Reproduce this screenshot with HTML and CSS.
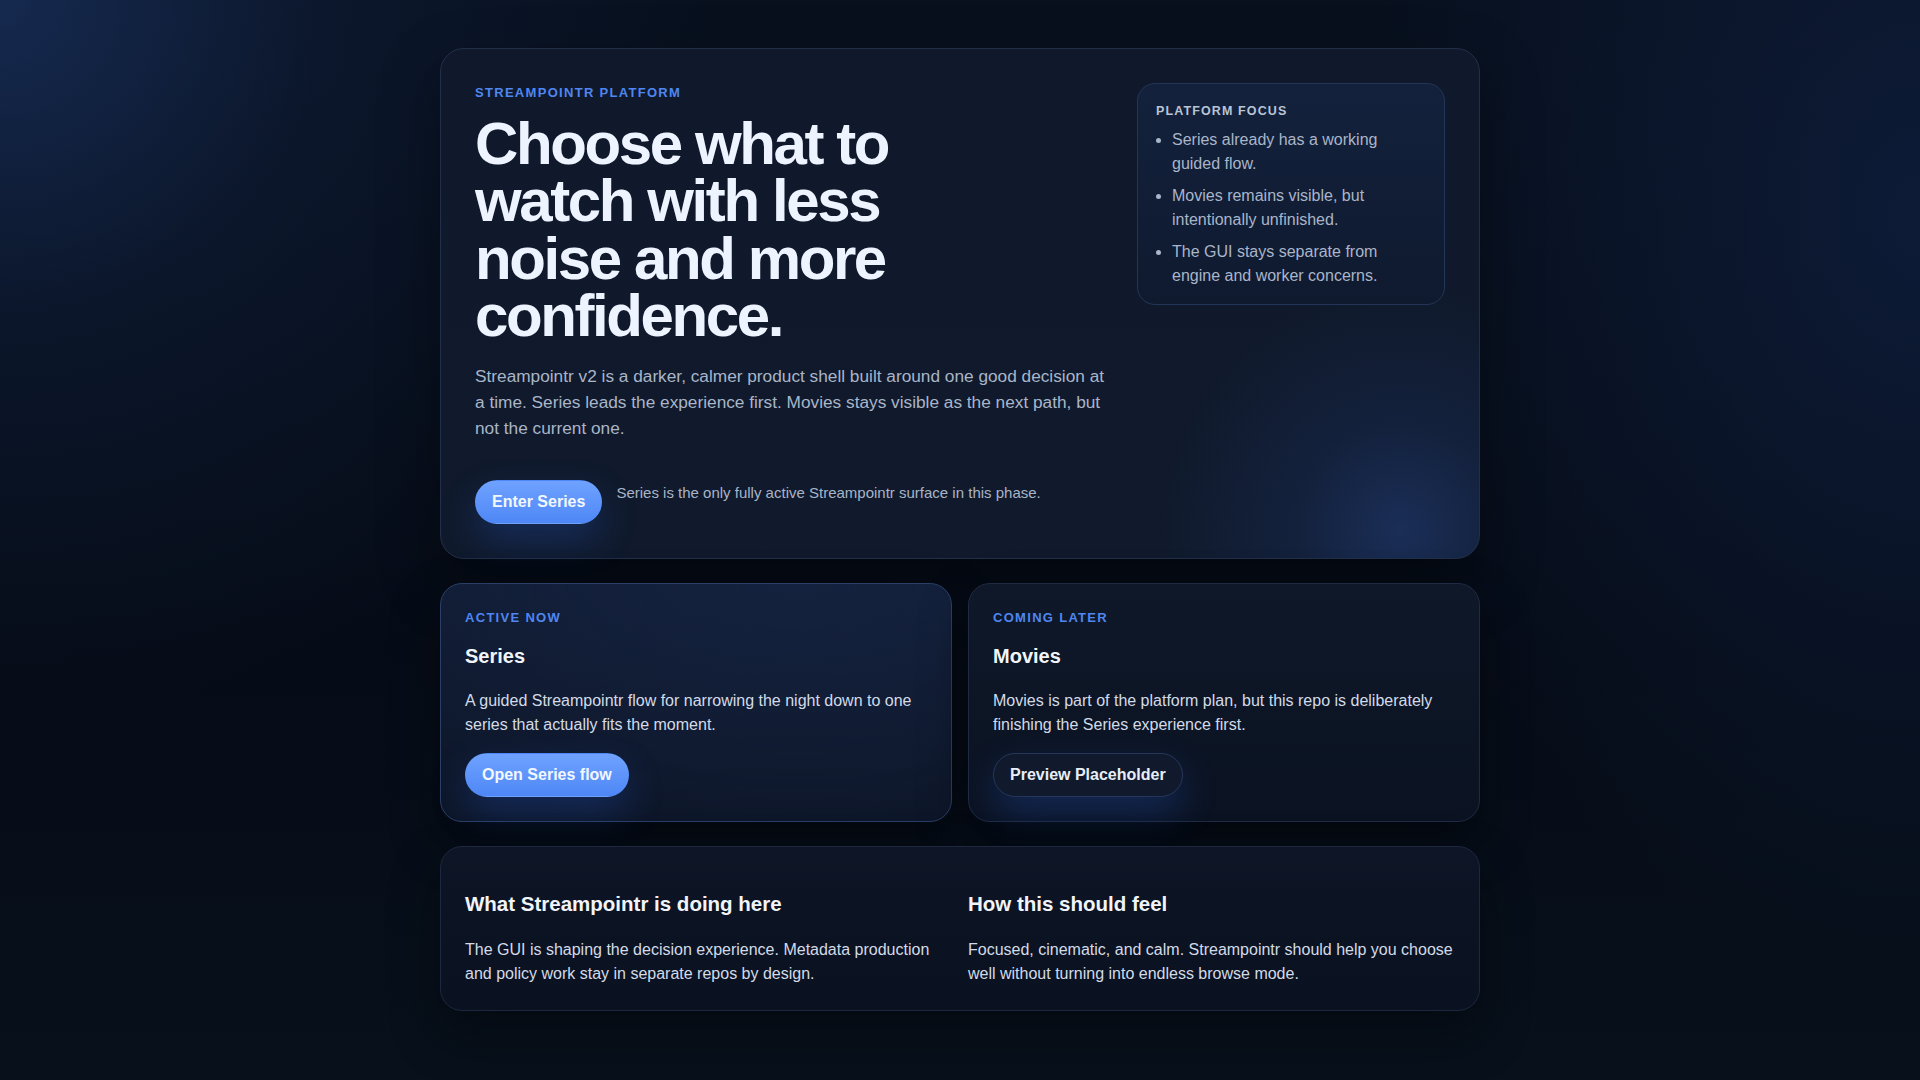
FILE: index.html
```html
<!DOCTYPE html>
<html lang="en">
<head>
<meta charset="utf-8">
<title>Streampointr</title>
<link rel="stylesheet" href="styles.css">
</head>
<body>
<main class="shell">
  <section class="hero">
    <div class="hero-main">
      <p class="eyebrow">Streampointr platform</p>
      <h1 class="hero-title">Choose what to watch with less noise and more confidence.</h1>
      <p class="lede">Streampointr v2 is a darker, calmer product shell built around one good decision at a time. Series leads the experience first. Movies stays visible as the next path, but not the current one.</p>
      <div class="actions">
        <a class="btn btn-primary" href="#">Enter Series</a>
        <p class="note">Series is the only fully active Streampointr surface in this phase.</p>
      </div>
    </div>
    <aside class="focus">
      <p class="focus-title">Platform focus</p>
      <ul class="focus-list">
        <li>Series already has a working guided flow.</li>
        <li>Movies remains visible, but intentionally unfinished.</li>
        <li>The GUI stays separate from engine and worker concerns.</li>
      </ul>
    </aside>
  </section>

  <section class="paths">
    <article class="card card-active">
      <p class="eyebrow">Active now</p>
      <h3 class="card-title">Series</h3>
      <p class="card-text">A guided Streampointr flow for narrowing the night down to one series that actually fits the moment.</p>
      <a class="btn btn-primary" href="#">Open Series flow</a>
    </article>
    <article class="card card-later">
      <p class="eyebrow">Coming later</p>
      <h3 class="card-title">Movies</h3>
      <p class="card-text">Movies is part of the platform plan, but this repo is deliberately finishing the Series experience first.</p>
      <a class="btn btn-ghost" href="#">Preview Placeholder</a>
    </article>
  </section>

  <section class="about">
    <div class="about-col">
      <h3 class="about-title">What Streampointr is doing here</h3>
      <p class="about-text">The GUI is shaping the decision experience. Metadata production and policy work stay in separate repos by design.</p>
    </div>
    <div class="about-col">
      <h3 class="about-title">How this should feel</h3>
      <p class="about-text">Focused, cinematic, and calm. Streampointr should help you choose well without turning into endless browse mode.</p>
    </div>
  </section>
</main>
</body>
</html>
```

FILE: styles.css
```css
* {
  box-sizing: border-box;
}

html, body {
  margin: 0;
  padding: 0;
}

body {
  min-height: 100vh;
  font-family: "Liberation Sans", Arial, sans-serif;
  line-height: 1.5;
  color: #e6edf7;
  background:
    radial-gradient(ellipse 720px 720px at 0% 0%, rgba(24, 46, 88, 0.85) 0%, rgba(18, 36, 70, 0.35) 45%, rgba(6, 11, 21, 0) 100%),
    radial-gradient(ellipse 560px 760px at 100% 20%, rgba(16, 32, 66, 0.7) 0%, rgba(6, 11, 21, 0) 100%),
    linear-gradient(180deg, #08101e 0%, #060c17 60%, #07101b 100%);
}

.shell {
  width: 1040px;
  margin: 0 auto;
  padding: 48px 0;
  display: flex;
  flex-direction: column;
  gap: 24px;
}

/* ---------- hero ---------- */
.hero {
  display: grid;
  grid-template-columns: 1fr 308px;
  column-gap: 28px;
  align-items: start;
  padding: 34px;
  border: 1px solid #212f48;
  border-radius: 24px;
  background:
    radial-gradient(circle 240px at 960px 480px, rgba(34, 62, 122, 0.55) 0%, rgba(28, 50, 100, 0.28) 45%, rgba(16, 26, 44, 0) 100%),
    linear-gradient(180deg, #0f192b 0%, #101a2c 100%);
  box-shadow: 0 24px 60px rgba(0, 0, 0, 0.35);
}

.eyebrow {
  margin: 0;
  font-size: 13px;
  line-height: 1.5;
  font-weight: 700;
  letter-spacing: 0.1em;
  text-transform: uppercase;
  color: #4f86f0;
}

.hero-title {
  margin: 12px 0 0;
  max-width: 520px;
  font-size: 60px;
  line-height: 0.96;
  font-weight: 700;
  letter-spacing: -0.04em;
  color: #eef4ff;
}

.lede {
  margin: 18px 0 0;
  font-size: 17.25px;
  line-height: 26px;
  color: #a9b5c9;
}

.actions {
  display: flex;
  align-items: flex-start;
  gap: 14px;
  margin-top: 39px;
}

.note {
  margin: 0;
  padding-top: 2px;
  font-size: 15px;
  line-height: 1.5;
  color: #a8b4c8;
}

/* ---------- buttons ---------- */
.btn {
  display: inline-block;
  padding: 11px 16px;
  border: 1px solid transparent;
  border-radius: 999px;
  font-size: 16px;
  line-height: 20px;
  font-weight: 700;
  text-decoration: none;
  white-space: nowrap;
  box-shadow: 0 16px 36px rgba(37, 84, 190, 0.32);
}

.btn-primary {
  color: #f3f7ff;
  background: linear-gradient(180deg, #6fa2ff 0%, #4e87f6 100%);
}

.btn-ghost {
  color: #e8eef8;
  background: #101a2c;
  border-color: #26365a;
}

/* ---------- focus aside ---------- */
.focus {
  padding: 18px 18px 16px;
  border: 1px solid #233556;
  border-radius: 18px;
  background: linear-gradient(180deg, #13213c 0%, #0f1a2f 100%);
}

.focus-title {
  margin: 0;
  font-size: 12.5px;
  line-height: 1.5;
  font-weight: 700;
  letter-spacing: 0.09em;
  text-transform: uppercase;
  color: #b9c4d6;
}

.focus-list {
  margin: 7px 0 0;
  padding-left: 16px;
  display: flex;
  flex-direction: column;
  gap: 8px;
}

.focus-list li {
  font-size: 16px;
  line-height: 24px;
  color: #a9b5c9;
}

/* ---------- path cards ---------- */
.paths {
  display: grid;
  grid-template-columns: 1fr 1fr;
  gap: 16px;
}

.card {
  display: flex;
  flex-direction: column;
  align-items: flex-start;
  padding: 24px;
  border-radius: 22px;
  border: 1px solid #1f2b42;
  box-shadow: 0 22px 50px rgba(0, 0, 0, 0.4);
}

.card-active {
  border-color: #2b3f66;
  background:
    radial-gradient(ellipse 500px 260px at 70% 0%, rgba(24, 40, 74, 0.5) 0%, rgba(16, 26, 46, 0) 100%),
    linear-gradient(180deg, #111c34 0%, #0d1628 100%);
}

.card-later {
  background: linear-gradient(180deg, #0f1829 0%, #0b1322 100%);
}

.card-title {
  margin: 16px 0 20px;
  font-size: 20px;
  line-height: 1.3;
  font-weight: 700;
  color: #f1f5fb;
}

.card-text {
  margin: 0 0 16px;
  font-size: 16px;
  line-height: 24px;
  color: #d3dbe8;
}

/* ---------- about ---------- */
.about {
  display: grid;
  grid-template-columns: 1fr 1fr;
  column-gap: 16px;
  padding: 24px;
  border: 1px solid #1c283d;
  border-radius: 22px;
  background: linear-gradient(180deg, #0d1526 0%, #0a1120 100%);
  box-shadow: 0 22px 50px rgba(0, 0, 0, 0.35);
}

.about-title {
  margin: 20px 0;
  font-size: 20.5px;
  line-height: 1.3;
  font-weight: 700;
  color: #f1f5fb;
}

.about-text {
  margin: 0;
  font-size: 16px;
  line-height: 24px;
  color: #d3dbe8;
}
```
